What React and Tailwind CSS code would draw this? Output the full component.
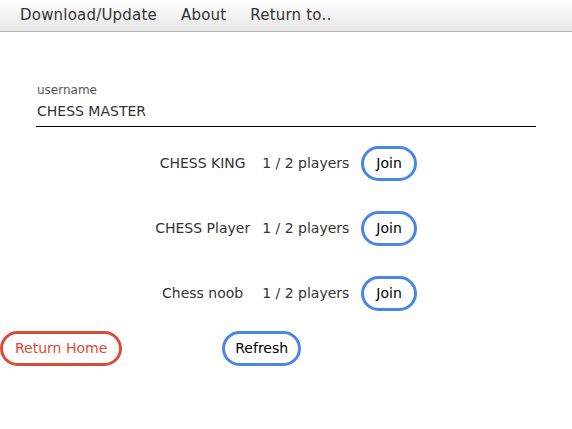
import React from "react";

const rows = [
  { name: "CHESS KING", players: "1 / 2 players" },
  { name: "CHESS Player", players: "1 / 2 players" },
  { name: "Chess noob", players: "1 / 2 players" },
];

export default function App() {
  return (
    <div className="w-[572px] h-[429px] bg-white text-[#333] font-['DejaVu_Sans',sans-serif] text-[14px]">
      <nav className="h-[32px] flex items-center pl-[8px] bg-gradient-to-b from-white to-[#e6e6e6] border-b border-[#b5b5b5] text-[15px] tracking-[0.2px]">
        <span className="px-[12px]">Download/Update</span>
        <span className="px-[12px]">About</span>
        <span className="px-[12px]">Return to..</span>
      </nav>
      <div className="px-[36px] pt-[51px]">
        <div className="text-[12px] text-[#555] pl-[1px] leading-[15px]">username</div>
        <div className="pl-[1px] pt-[4px] pb-[6px] leading-[18px] border-b border-black">CHESS MASTER</div>
      </div>
      <div className="flex justify-center pt-[19px]">
        <div className="grid grid-cols-[auto_auto_auto] gap-y-[30px] gap-x-[12px] items-center">
          {rows.map((r) => (
            <React.Fragment key={r.name}>
              <div className="text-center">{r.name}</div>
              <div>{r.players}</div>
              <button className="h-[35px] px-[12px] rounded-full border-[3px] border-[#4a86e8] text-black">Join</button>
            </React.Fragment>
          ))}
        </div>
      </div>
      <div className="flex items-center pt-[20px]">
        <button className="h-[35px] px-[12px] rounded-full border-[3px] border-[#dd4b39] text-[#dd4b39]">Return Home</button>
        <button className="ml-[100px] h-[35px] px-[10px] rounded-full border-[3px] border-[#4a86e8] text-black">Refresh</button>
      </div>
    </div>
  );
}
